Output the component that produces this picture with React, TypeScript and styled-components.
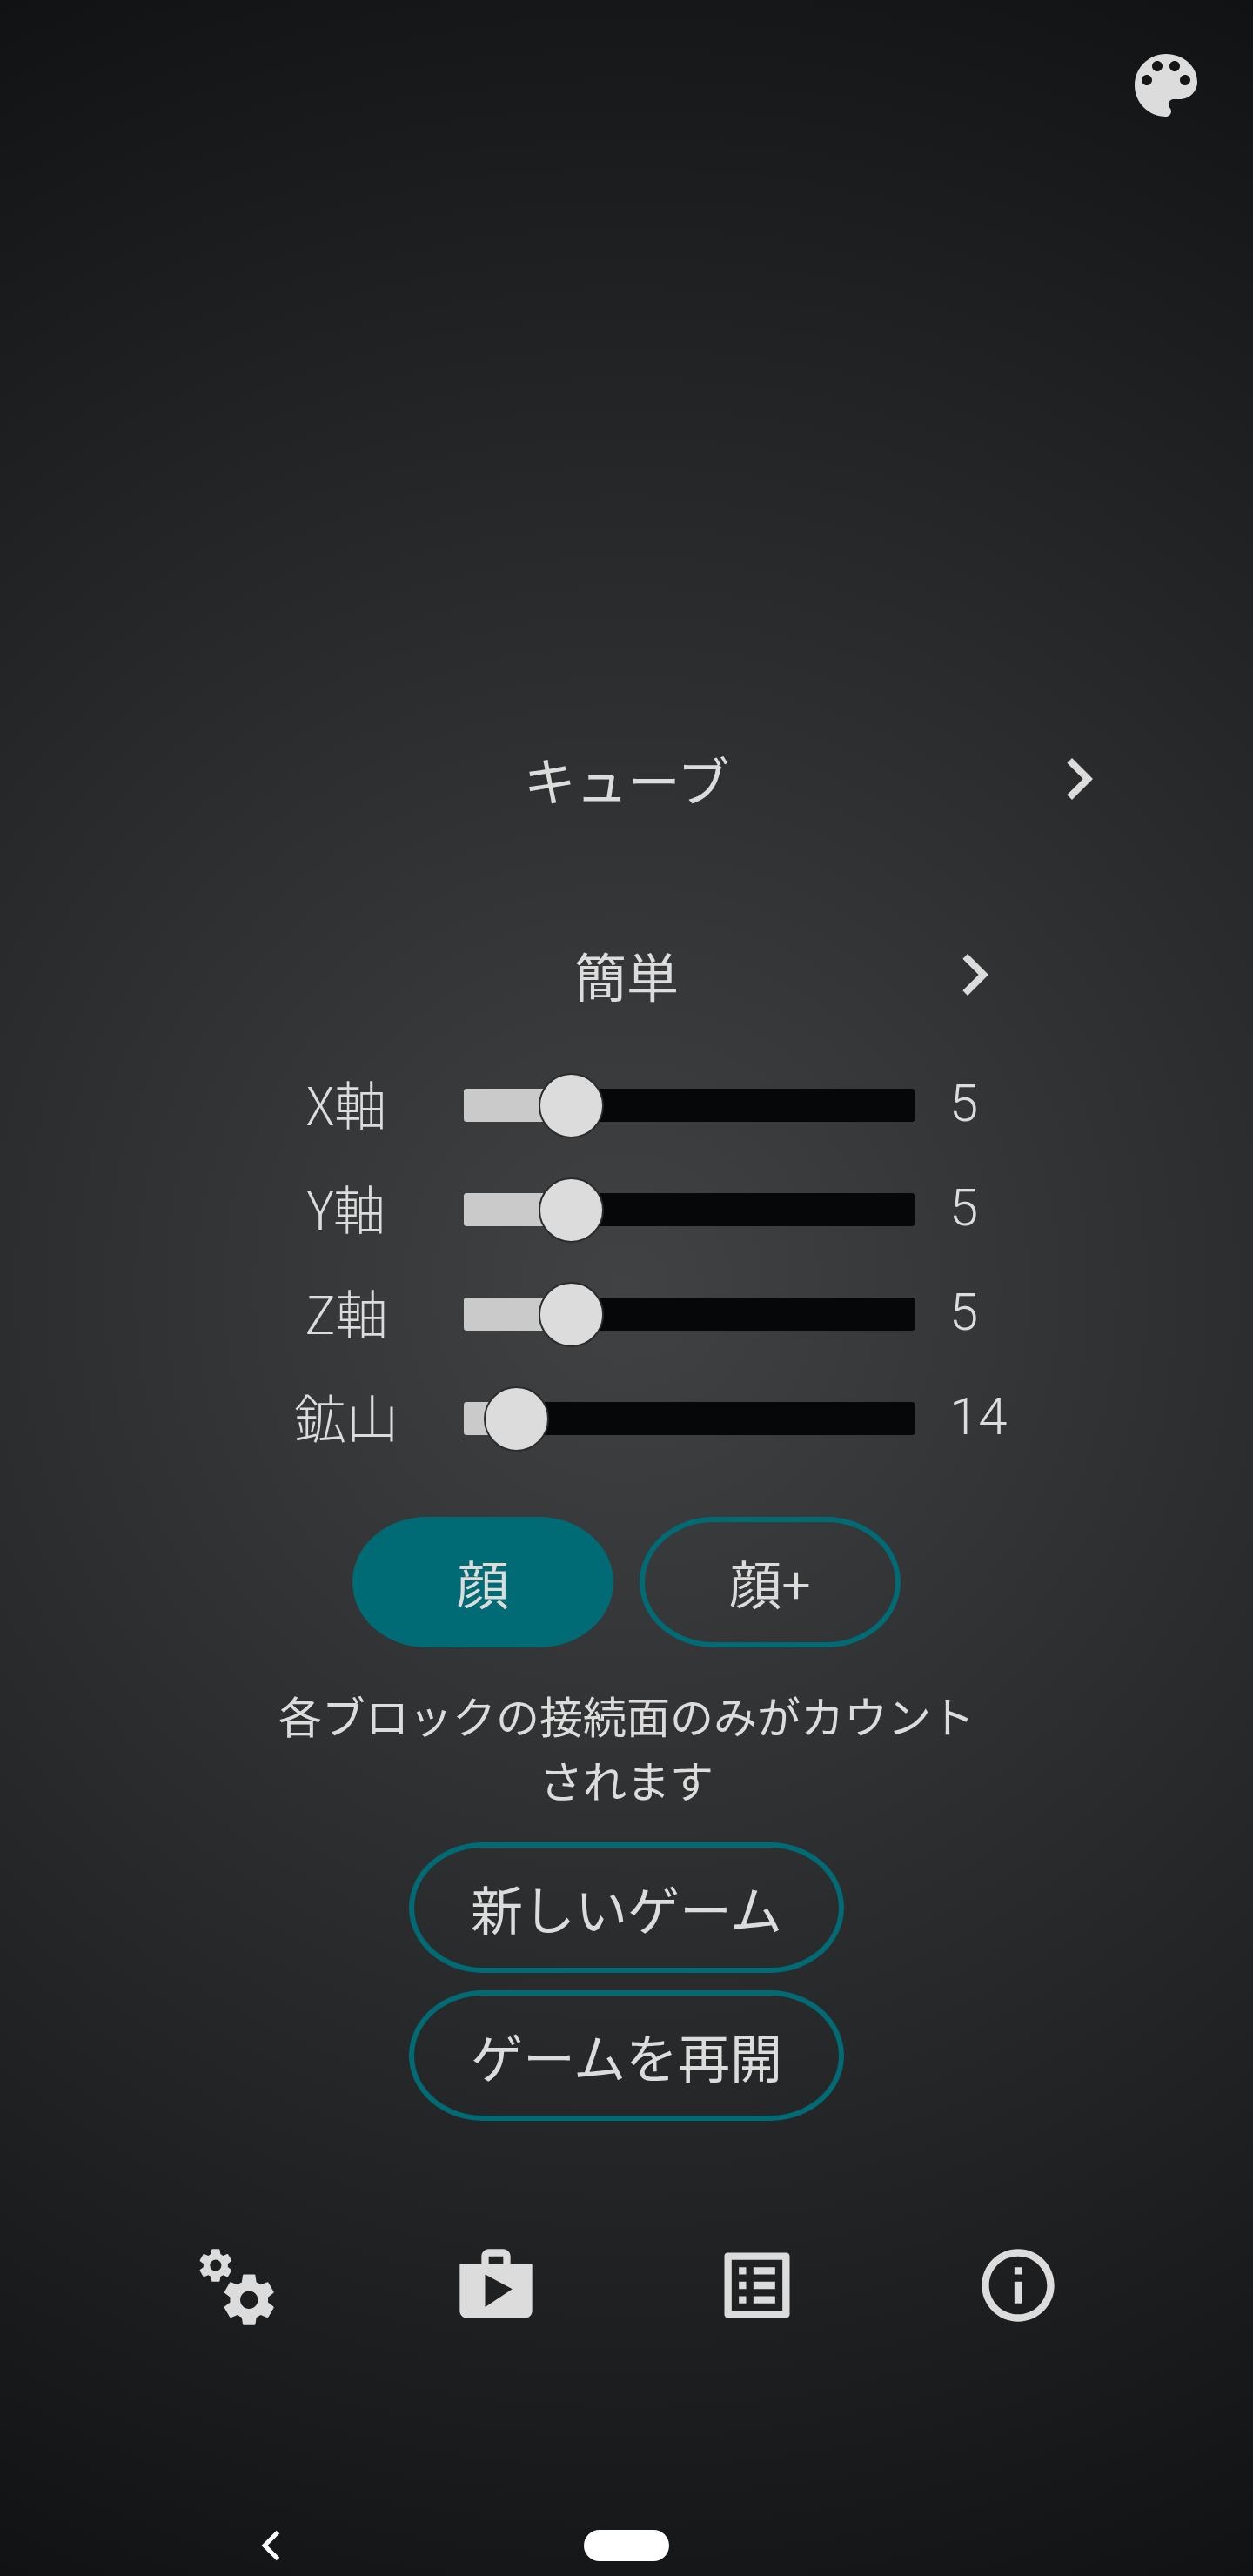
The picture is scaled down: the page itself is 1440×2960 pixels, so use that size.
import React from "react";
import styled, { createGlobalStyle } from "styled-components";

const GlobalStyle = createGlobalStyle`
  * { box-sizing: border-box; }
  html, body { margin: 0; padding: 0; background: #101214; }
  button { appearance: none; margin: 0; padding: 0; border: 0; background: none; color: inherit; font: inherit; }
`;

const Screen = styled.main`
  width: 1440px;
  height: 2960px;
  display: flex;
  flex-direction: column;
  align-items: center;
  overflow: hidden;
  color: #dcdcdc;
  background: radial-gradient(circle 1646px at 720px 1480px, #414243 0%, #101214 100%);
  font-family: "Noto Sans CJK JP", sans-serif;
  font-size: 60px;
  line-height: 70px;
`;

const TopBar = styled.header`
  width: 100%;
  display: flex;
  justify-content: flex-end;
  padding: 50px 52px 0 0;
`;

const Icon = styled.svg<{ $size: number }>`
  display: block;
  flex: none;
  width: ${(p) => p.$size}px;
  height: ${(p) => p.$size}px;
  fill: currentColor;
`;

const Picker = styled.div<{ $width: number; $top: number }>`
  width: ${(p) => p.$width}px;
  height: 96px;
  margin-top: ${(p) => p.$top}px;
  display: grid;
  grid-template-columns: 96px 1fr 96px;
  align-items: center;
`;

const PickerLabel = styled.span`
  grid-column: 2;
  text-align: center;
`;

const Sliders = styled.section`
  width: 840px;
  margin-top: 42px;
  display: flex;
  flex-direction: column;
`;

const SliderRow = styled.label`
  height: 120px;
  display: grid;
  grid-template-columns: 196px 37px 518px 40px 1fr;
  align-items: center;
  font-weight: 300;
`;

const SliderName = styled.span`
  text-align: center;
  padding-bottom: 7px;
`;

const SliderValue = styled.span`
  grid-column: 5;
  padding-bottom: 4px;
  font-family: Roboto, sans-serif;
`;

const Track = styled.div`
  grid-column: 3;
  height: 38px;
  display: flex;
  align-items: center;
  border-radius: 3px;
  background: #050709;
`;

const Fill = styled.div`
  height: 38px;
  border-radius: 3px 0 0 3px;
  background: #cacaca;
  flex: none;
`;

const Thumb = styled.div`
  flex: none;
  width: 75px;
  height: 75px;
  margin-left: -37.5px;
  border: 2px solid #2a2b2c;
  border-radius: 50%;
  background: #dcdcdc;
`;

const Pills = styled.div`
  display: flex;
  gap: 30px;
  margin-top: 53px;
`;

const Pill = styled.button<{ $width: number; $filled?: boolean }>`
  width: ${(p) => p.$width}px;
  height: 150px;
  display: flex;
  align-items: center;
  justify-content: center;
  border: 6px solid #006a75;
  border-radius: 85px / 75px;
  background: ${(p) => (p.$filled ? "#006a75" : "transparent")};
`;

const Hint = styled.p`
  width: 820px;
  margin: 40px 0 0;
  font-size: 50px;
  line-height: 74px;
  text-align: center;
`;

const Actions = styled.div`
  display: flex;
  flex-direction: column;
  gap: 20px;
  margin-top: 36px;
`;

const Tools = styled.nav`
  width: 1200px;
  display: grid;
  grid-template-columns: repeat(4, 1fr);
  justify-items: center;
  margin-top: 139px;
`;

const SystemBar = styled.footer`
  width: 1440px;
  height: 36px;
  margin-top: 231px;
  display: grid;
  grid-template-columns: 622px 196px 622px;
  justify-items: center;
  align-items: center;
  color: #fff;
`;

const HomePill = styled.div`
  width: 98px;
  height: 36px;
  border-radius: 18px;
  background: #fff;
`;

const PALETTE =
  "M12 3c-4.97 0-9 4.03-9 9s4.03 9 9 9c.83 0 1.5-.67 1.5-1.5 0-.39-.15-.74-.39-1.01-.23-.26-.38-.61-.38-.99 0-.83.67-1.5 1.5-1.5H16c2.76 0 5-2.24 5-5 0-4.42-4.03-8-9-8zm-5.5 9c-.83 0-1.5-.67-1.5-1.5S5.67 9 6.5 9 8 9.67 8 10.5 7.33 12 6.5 12zm3-4C8.67 8 8 7.33 8 6.5S8.67 5 9.5 5s1.5.67 1.5 1.5S10.33 8 9.5 8zm5 0c-.83 0-1.5-.67-1.5-1.5S13.67 5 14.5 5s1.5.67 1.5 1.5S15.33 8 14.5 8zm3 4c-.83 0-1.5-.67-1.5-1.5S16.67 9 17.5 9s1.5.67 1.5 1.5-.67 1.5-1.5 1.5z";
const CHEVRON = "M10 6L8.59 7.41 13.17 12l-4.58 4.59L10 18l6-6z";
const COGS =
  "M15.9,18.45C17.25,18.45 18.35,17.35 18.35,16C18.35,14.65 17.25,13.55 15.9,13.55C14.54,13.55 13.45,14.65 13.45,16C13.45,17.35 14.54,18.45 15.9,18.45M21.1,16.68L22.58,17.84C22.71,17.95 22.75,18.13 22.66,18.29L21.26,20.71C21.17,20.86 21,20.92 20.83,20.86L19.09,20.16C18.73,20.44 18.33,20.67 17.91,20.85L17.64,22.7C17.62,22.87 17.47,23 17.3,23H14.5C14.32,23 14.18,22.87 14.15,22.7L13.89,20.85C13.46,20.67 13.07,20.44 12.71,20.16L10.96,20.86C10.81,20.92 10.62,20.86 10.54,20.71L9.14,18.29C9.05,18.13 9.09,17.95 9.22,17.84L10.7,16.68L10.65,16L10.7,15.31L9.22,14.16C9.09,14.05 9.05,13.86 9.14,13.71L10.54,11.29C10.62,11.13 10.81,11.07 10.96,11.13L12.71,11.84C13.07,11.56 13.46,11.32 13.89,11.15L14.15,9.29C14.18,9.13 14.32,9 14.5,9H17.3C17.47,9 17.62,9.13 17.64,9.29L17.91,11.15C18.33,11.32 18.73,11.56 19.09,11.84L20.83,11.13C21,11.07 21.17,11.13 21.26,11.29L22.66,13.71C22.75,13.86 22.71,14.05 22.58,14.16L21.1,15.31L21.15,16L21.1,16.68M6.69,8.07C7.56,8.07 8.26,7.37 8.26,6.5C8.26,5.63 7.56,4.92 6.69,4.92A1.58,1.58 0 0,0 5.11,6.5C5.11,7.37 5.82,8.07 6.69,8.07M10.03,6.94L11,7.68C11.07,7.75 11.09,7.87 11.03,7.97L10.13,9.53C10.08,9.63 9.96,9.67 9.86,9.63L8.74,9.18L8,9.62L7.81,10.81C7.79,10.92 7.7,11 7.59,11H5.79C5.67,11 5.58,10.92 5.56,10.81L5.4,9.62L4.64,9.18L3.5,9.63C3.41,9.67 3.3,9.63 3.24,9.53L2.34,7.97C2.28,7.87 2.31,7.75 2.39,7.68L3.34,6.94L3.31,6.5L3.34,6.06L2.39,5.32C2.31,5.25 2.28,5.13 2.34,5.03L3.24,3.47C3.3,3.37 3.41,3.33 3.5,3.37L4.63,3.82L5.4,3.38L5.56,2.19C5.58,2.08 5.67,2 5.79,2H7.59C7.7,2 7.79,2.08 7.81,2.19L8,3.38L8.74,3.82L9.86,3.37C9.96,3.33 10.08,3.37 10.13,3.47L11.03,5.03C11.09,5.13 11.07,5.25 11,5.32L10.03,6.06L10.06,6.5L10.03,6.94Z";
const SHOP =
  "M16 6V4c0-1.11-.89-2-2-2h-4c-1.11 0-2 .89-2 2v2H2v13c0 1.11.89 2 2 2h16c1.11 0 2-.89 2-2V6h-6zm-6-2h4v2h-4V4zM9 18V9l7.5 4L9 18z";
const LIST =
  "M19 5v14H5V5h14m1.1-2H3.9c-.5 0-.9.4-.9.9v16.2c0 .4.4.9.9.9h16.2c.4 0 .9-.5.9-.9V3.9c0-.5-.5-.9-.9-.9zM11 7h6v2h-6V7zm0 4h6v2h-6v-2zm0 4h6v2h-6v-2zM7 7h2v2H7V7zm0 4h2v2H7v-2zm0 4h2v2H7v-2z";
const INFO =
  "M11 17h2v-6h-2v6zm1-15C6.48 2 2 6.48 2 12s4.48 10 10 10 10-4.48 10-10S17.52 2 12 2zm0 18c-4.41 0-8-3.59-8-8s3.59-8 8-8 8 3.59 8 8-3.59 8-8 8zM11 9h2V7h-2v2z";

const Glyph = ({ path, size = 96 }: { path: string; size?: number }) => (
  <Icon $size={size} viewBox="0 0 24 24" aria-hidden="true">
    <path d={path} fillRule="evenodd" />
  </Icon>
);

const sliders = [
  { name: "X軸", value: 5, offset: 123 },
  { name: "Y軸", value: 5, offset: 123 },
  { name: "Z軸", value: 5, offset: 123 },
  { name: "鉱山", value: 14, offset: 60.5 },
];

const tools = [COGS, SHOP, LIST, INFO];

export default function App() {
  return (
    <>
      <GlobalStyle />
      <Screen lang="ja">
        <TopBar>
          <button type="button">
            <Glyph path={PALETTE} />
          </button>
        </TopBar>

        <Picker $width={1136} $top={701}>
          <PickerLabel>キューブ</PickerLabel>
          <Glyph path={CHEVRON} />
        </Picker>
        <Picker $width={896} $top={129}>
          <PickerLabel>簡単</PickerLabel>
          <Glyph path={CHEVRON} />
        </Picker>

        <Sliders>
          {sliders.map((s) => (
            <SliderRow key={s.name}>
              <SliderName>{s.name}</SliderName>
              <Track>
                <Fill style={{ width: s.offset }} />
                <Thumb />
              </Track>
              <SliderValue>{s.value}</SliderValue>
            </SliderRow>
          ))}
        </Sliders>

        <Pills>
          <Pill type="button" $width={300} $filled>
            顔
          </Pill>
          <Pill type="button" $width={300}>
            顔+
          </Pill>
        </Pills>

        <Hint>各ブロックの接続面のみがカウントされます</Hint>

        <Actions>
          <Pill type="button" $width={500}>
            新しいゲーム
          </Pill>
          <Pill type="button" $width={500}>
            ゲームを再開
          </Pill>
        </Actions>

        <Tools>
          {tools.map((path) => (
            <Glyph key={path} path={path} size={100} />
          ))}
        </Tools>

        <SystemBar>
          <Icon $size={36} viewBox="0 0 36 36" aria-hidden="true">
            <path
              d="M26.5 2.5L11 18L26.5 33.5"
              fill="none"
              stroke="currentColor"
              strokeWidth="5"
            />
          </Icon>
          <HomePill />
        </SystemBar>
      </Screen>
    </>
  );
}
